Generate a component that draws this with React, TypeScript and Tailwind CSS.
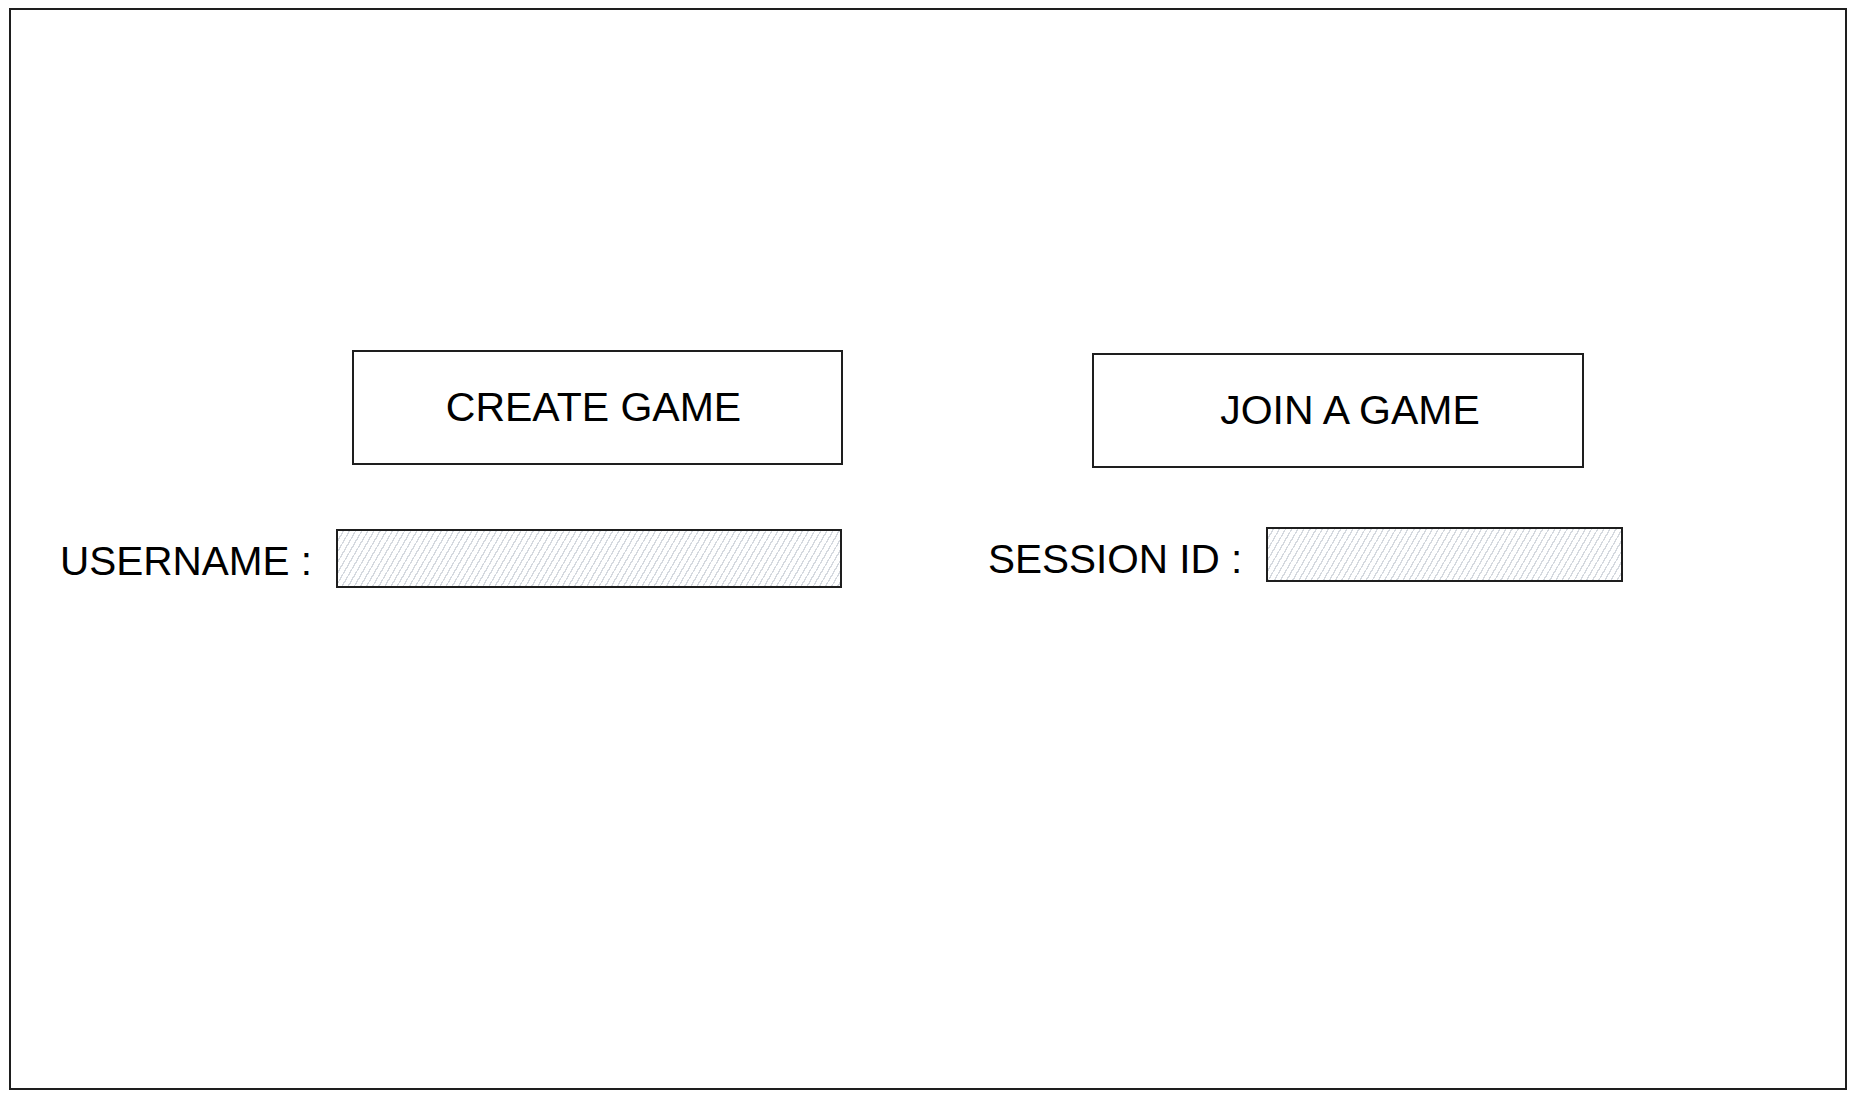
import React from 'react';

const hatch =
  'bg-white bg-[image:repeating-linear-gradient(120deg,transparent_0px,transparent_4px,#d5d9df_4px,#d5d9df_5.3px)]';

const SketchButton: React.FC<{ className?: string; children: React.ReactNode }> = ({ className, children }) => (
  <button
    type="button"
    className={`flex h-[115px] items-center justify-center border-2 border-[#1e1e1e] bg-white text-[41px] leading-none text-black ${className ?? ''}`}
  >
    {children}
  </button>
);

export default function App() {
  return (
    <div className="min-h-[1099px] w-full bg-white px-[9px] pt-[8px] pb-[9px] font-['Liberation_Sans',Arial,sans-serif] text-black">
      {/* Outer frame */}
      <div className="h-[1082px] border-2 border-[#1e1e1e] pt-[340px] pl-[51px]">
        <div className="flex items-start">
          {/* Create column */}
          <div className="flex w-[781px] flex-col">
            <SketchButton className="ml-[290px] w-[491px] pr-2">CREATE GAME</SketchButton>
            <div className="mt-[64px] flex items-start">
              <label className="mt-[12px] -ml-[2px] w-[276px] whitespace-nowrap text-[40.5px] leading-none">USERNAME :</label>
              <div className={`h-[59px] w-[506px] border-2 border-[#1e1e1e] ${hatch}`} />
            </div>
          </div>

          {/* Join column */}
          <div className="ml-[147px] flex flex-col">
            <SketchButton className="mt-[3px] ml-[102px] w-[492px] pl-6">JOIN A GAME</SketchButton>
            <div className="mt-[59px] flex items-start">
              <label className="mt-[12px] -ml-[2px] w-[278px] whitespace-nowrap text-[40.5px] leading-none">SESSION ID :</label>
              <div className={`h-[55px] w-[357px] border-2 border-[#1e1e1e] ${hatch}`} />
            </div>
          </div>
        </div>
      </div>
    </div>
  );
}
